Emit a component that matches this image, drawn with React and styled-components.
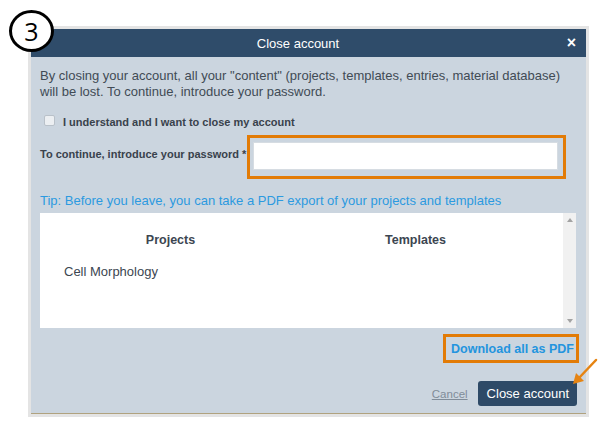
import React from 'react';
import styled, { createGlobalStyle } from 'styled-components';

const GlobalStyle = createGlobalStyle`
  html, body {
    margin: 0;
    padding: 0;
    background: #ffffff;
    font-family: "Liberation Sans", Arial, sans-serif;
  }
`;

const Page = styled.div`
  position: relative;
  width: 614px;
  height: 439px;
  padding: 26px 0 0 28px;
  box-sizing: border-box;
`;

const StepBadge = styled.div`
  position: absolute;
  left: 9px;
  top: 10px;
  width: 39px;
  height: 36px;
  border: 3px solid #000;
  border-radius: 50%;
  background: #fff;
  display: flex;
  align-items: center;
  justify-content: center;
  font-family: "Open Sans", "DejaVu Sans", sans-serif;
  font-size: 25px;
  line-height: 1;
  color: #000;
  z-index: 2;
`;

const Frame = styled.div`
  width: 555px;
  border: 3px solid #e4e4e4;
  background: #cbd5df;
`;

const Header = styled.div`
  position: relative;
  height: 28px;
  padding-right: 21px;
  background: #2f4c6a;
  color: #fff;
  display: flex;
  align-items: center;
  justify-content: center;
  font-size: 13px;
`;

const CloseX = styled.span`
  position: absolute;
  right: 10px;
  top: 6px;
  font-size: 16px;
  font-weight: bold;
  line-height: 16px;
`;

const Body = styled.div`
  padding: 11px 10px 0 9px;
  height: 357px;
  box-sizing: border-box;
  border-bottom: 1px solid #b0a27f;
  display: flex;
  flex-direction: column;
`;

const Intro = styled.p`
  margin: 0;
  font-size: 13px;
  line-height: 16px;
  color: #414b55;
`;

const CheckRow = styled.label`
  display: flex;
  align-items: center;
  gap: 8px;
  margin: 16px 0 0 4px;
  font-size: 11px;
  font-weight: bold;
  color: #39424c;
`;

const Check = styled.span`
  width: 9px;
  height: 9px;
  border: 1px solid #b9c1c9;
  border-radius: 2px;
  background: #eceff2;
  margin-top: -3px;
`;

const PasswordRow = styled.div`
  display: flex;
  align-items: center;
  margin-top: 7px;
`;

const FieldLabel = styled.span`
  font-size: 11px;
  font-weight: bold;
  color: #39424c;
  width: 207px;
  margin-top: -6px;
`;

const Highlight = styled.div`
  border: 3px solid #e27b06;
  padding: ${p => p.pad || '0'};
`;

const PasswordInput = styled.div`
  width: 303px;
  height: 26px;
  background: #fff;
  border: 1px solid #d6dce2;
`;

const Tip = styled.div`
  margin-top: 14px;
  font-size: 13px;
  line-height: 16px;
  color: #2c9ae0;
`;

const ListBox = styled.div`
  margin-top: 4px;
  height: 115px;
  background: #fff;
  display: flex;
`;

const ListContent = styled.div`
  flex: 1;
  padding: 20px 0 0 8px;
`;

const Columns = styled.div`
  display: grid;
  grid-template-columns: 245px 245px;
  row-gap: 17px;
  font-size: 13px;
  color: #3c4651;
`;

const ColHead = styled.div`
  text-align: center;
  font-weight: bold;
  font-size: 12.5px;
`;

const Cell = styled.div`
  padding-left: 16px;
`;

const Scrollbar = styled.div`
  width: 13px;
  background: #f1f1f1;
  display: flex;
  flex-direction: column;
  justify-content: space-between;
  align-items: center;
  padding: 5px 0;
  box-sizing: border-box;
`;

const Arrow = styled.span`
  width: 0;
  height: 0;
  border-left: 3px solid transparent;
  border-right: 3px solid transparent;
  ${p => (p.up ? 'border-bottom: 4px solid #a3a3a3;' : 'border-top: 4px solid #a3a3a3;')}
`;

const DownloadRow = styled.div`
  display: flex;
  justify-content: flex-end;
  margin: 6px -3px 0 0;
`;

const DownloadLink = styled.a`
  display: block;
  padding: 5px 2px 4px 5px;
  font-size: 12.5px;
  font-weight: bold;
  color: #2394de;
  text-decoration: none;
`;

const Footer = styled.div`
  display: flex;
  justify-content: flex-end;
  align-items: center;
  gap: 10px;
  margin: 18px -1px 0 0;
`;

const CancelLink = styled.a`
  font-size: 11.5px;
  color: #808c99;
  text-decoration: underline;
`;

const PrimaryButton = styled.button`
  height: 25px;
  padding: 0 8px 0 9px;
  border: none;
  border-radius: 3px;
  background: #2e4a67;
  color: #fff;
  font-family: "Liberation Sans", Arial, sans-serif;
  font-size: 13px;
`;

const Pointer = styled.svg`
  position: absolute;
  left: 570px;
  top: 356px;
  overflow: visible;
`;

export default function App() {
  return (
    <>
      <GlobalStyle />
      <Page>
        <StepBadge>3</StepBadge>
        <Frame>
          <Header>
            Close account
            <CloseX>×</CloseX>
          </Header>
          <Body>
            <Intro>
              By closing your account, all your "content" (projects, templates, entries, material database)
              <br />
              will be lost. To continue, introduce your password.
            </Intro>
            <CheckRow>
              <Check />
              I understand and I want to close my account
            </CheckRow>
            <PasswordRow>
              <FieldLabel>To continue, introduce your password *</FieldLabel>
              <Highlight pad="4px 5px 6px 3px">
                <PasswordInput />
              </Highlight>
            </PasswordRow>
            <Tip>Tip: Before you leave, you can take a PDF export of your projects and templates</Tip>
            <ListBox>
              <ListContent>
                <Columns>
                  <ColHead>Projects</ColHead>
                  <ColHead>Templates</ColHead>
                  <Cell>Cell Morphology</Cell>
                </Columns>
              </ListContent>
              <Scrollbar>
                <Arrow up />
                <Arrow />
              </Scrollbar>
            </ListBox>
            <DownloadRow>
              <Highlight>
                <DownloadLink>Download all as PDF</DownloadLink>
              </Highlight>
            </DownloadRow>
            <Footer>
              <CancelLink>Cancel</CancelLink>
              <PrimaryButton>Close account</PrimaryButton>
            </Footer>
          </Body>
        </Frame>
        <Pointer width="30" height="32" viewBox="0 0 30 32">
          <line x1="26" y1="4" x2="8" y2="23" stroke="#e68412" strokeWidth="2.5" strokeLinecap="round" />
          <polygon points="3,28 6,17 14,25" fill="#e68412" />
        </Pointer>
      </Page>
    </>
  );
}
